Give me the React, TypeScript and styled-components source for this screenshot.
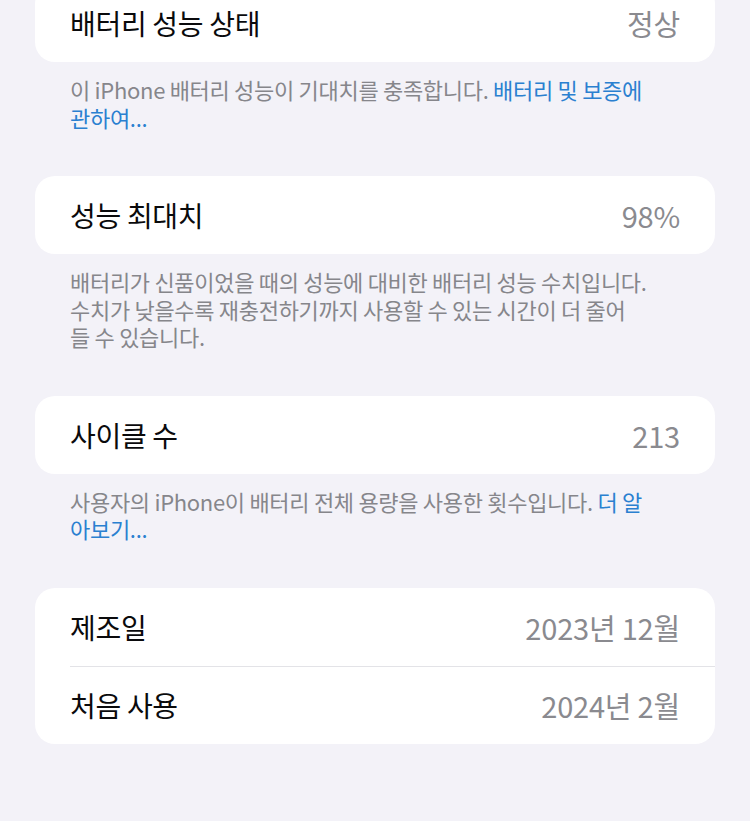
import React from 'react';
import styled, { createGlobalStyle } from 'styled-components';

const GlobalStyle = createGlobalStyle`
  html, body {
    margin: 0;
    padding: 0;
    background: #f3f2f8;
  }
  body {
    font-family: 'Noto Sans CJK KR', 'Noto Sans', sans-serif;
    -webkit-font-smoothing: antialiased;
  }
`;

type Row = { label: string; value: string };
// each note line is a list of [text, isLink] pieces
type Piece = [string, boolean?];
type Section = { rows: Row[]; note?: Piece[][] };

const sections: Section[] = [
  {
    rows: [{ label: '배터리 성능 상태', value: '정상' }],
    note: [
      [['이 iPhone 배터리 성능이 기대치를 충족합니다. '], ['배터리 및 보증에', true]],
      [['관하여...', true]],
    ],
  },
  {
    rows: [{ label: '성능 최대치', value: '98%' }],
    note: [
      [['배터리가 신품이었을 때의 성능에 대비한 배터리 성능 수치입니다.']],
      [['수치가 낮을수록 재충전하기까지 사용할 수 있는 시간이 더 줄어']],
      [['들 수 있습니다.']],
    ],
  },
  {
    rows: [{ label: '사이클 수', value: '213' }],
    note: [
      [['사용자의 iPhone이 배터리 전체 용량을 사용한 횟수입니다. '], ['더 알', true]],
      [['아보기...', true]],
    ],
  },
  {
    rows: [
      { label: '제조일', value: '2023년 12월' },
      { label: '처음 사용', value: '2024년 2월' },
    ],
  },
];

export default function App() {
  return (
    <>
      <GlobalStyle />
      <Page>
        {sections.map((section, i) => (
          <Group key={i}>
            <Card>
              {section.rows.map((row, j) => (
                <RowItem key={row.label} $divider={j > 0}>
                  <Label>{row.label}</Label>
                  <Value>{row.value}</Value>
                </RowItem>
              ))}
            </Card>
            {section.note && (
              <Note>
                {section.note.map((line, k) => (
                  <NoteLine key={k}>
                    {line.map(([text, link], m) =>
                      link ? <Link key={m}>{text}</Link> : <span key={m}>{text}</span>
                    )}
                  </NoteLine>
                ))}
              </Note>
            )}
          </Group>
        ))}
      </Page>
    </>
  );
}

const Page = styled.div`
  width: 750px;
  min-height: 821px;
  overflow: hidden;
  box-sizing: border-box;
  padding: 0 35px;
  display: flex;
  flex-direction: column;
  gap: 45px;

  & > div:first-child {
    margin-top: -16px;
  }
`;

const Group = styled.div`
  display: flex;
  flex-direction: column;
`;

const Card = styled.div`
  background: #ffffff;
  border-radius: 20px;
  overflow: hidden;
`;

const RowItem = styled.div<{ $divider: boolean }>`
  position: relative;
  height: 78px;
  display: flex;
  align-items: center;
  justify-content: space-between;
  padding: 0 35px;

  &::before {
    content: '';
    display: ${p => (p.$divider ? 'block' : 'none')};
    position: absolute;
    top: 0;
    left: 35px;
    right: 0;
    height: 1px;
    background: #e3e3e7;
  }
`;

const Label = styled.span`
  font-size: 28px;
  color: #0a0a0c;
  letter-spacing: -0.3px;
`;

const Value = styled.span`
  font-size: 29px;
  color: #8a8a8f;
  letter-spacing: -0.2px;
`;

const Note = styled.div`
  padding: 14px 0 0 35px;
  font-size: 22px;
  line-height: 27.5px;
  color: #86868b;
  letter-spacing: -0.3px;
`;

const NoteLine = styled.div`
  white-space: nowrap;
`;

const Link = styled.span`
  color: #2a80d0;
`;
